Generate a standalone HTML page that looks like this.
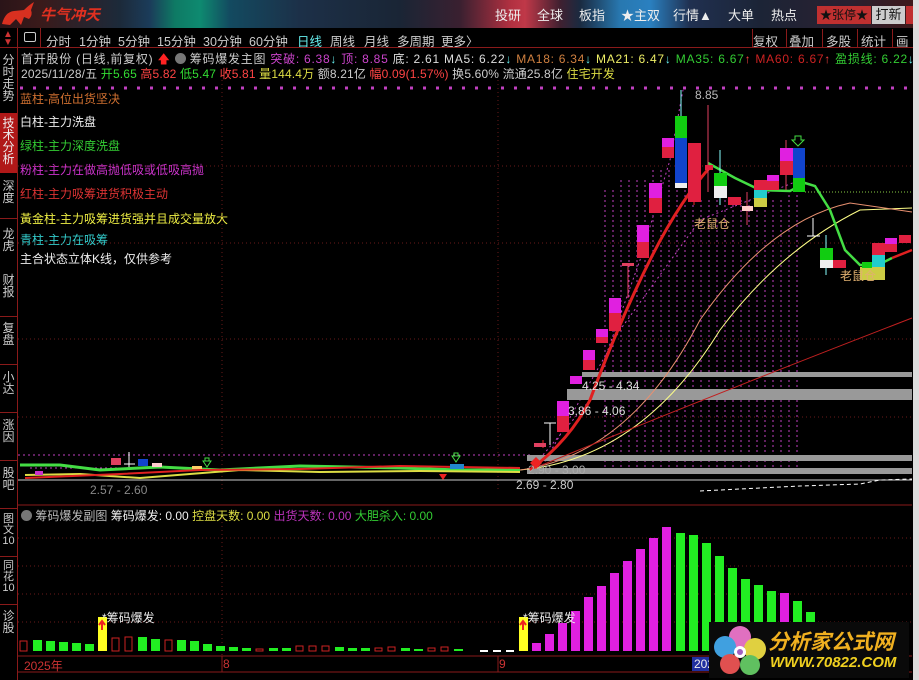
<!DOCTYPE html>
<html><head><meta charset="utf-8"><style>
*{margin:0;padding:0;box-sizing:border-box}
body{width:919px;height:680px;background:#000;overflow:hidden;position:relative;font-family:"Liberation Sans","Noto Sans CJK SC",sans-serif;font-size:12px;color:#ccc}
.a{position:absolute;white-space:nowrap}
#top{left:0;top:0;width:919px;height:28px;background:linear-gradient(90deg,#2a1418 0,#3a1a1a 40px,#1c2a3a 120px,#1b3c5a 150px,#0e7a64 175px,#0e8a70 200px,#134a60 230px,#1c3048 300px,#1a2535 400px,#3a2030 460px,#b03040 510px,#c03848 525px,#402030 560px,#1a2a40 580px,#2878b0 620px,#2a80c0 650px,#203050 690px,#1c2436 760px,#2a2030 850px,#401818 919px)}
.tb{top:5px;color:#eee;font-size:13px}
.tl{top:31px;font-size:12.5px;color:#ccc}
.side{left:0;width:17px;color:#ccc;font-size:12px;line-height:12px;text-align:center;white-space:normal;word-break:break-all}
</style></head><body>
<div id="top" class="a"></div>
<div class="a" style="left:40px;top:4px;color:#e03020;font-size:15px;font-weight:bold;font-style:italic">牛气冲天</div>
<svg class="a" style="left:0;top:0" width="38" height="28"><path d="M2 24 Q5 12 14 11 L24 10 Q29 5 34 2 L31 10 Q33 15 29 19 L24 17 L21 25 L16 19 L10 25 Z" fill="#d83020"/></svg>
<span class="a tb" style="left:495px">投研</span><span class="a tb" style="left:537px">全球</span><span class="a tb" style="left:579px">板指</span><span class="a tb" style="left:621px">★主双</span><span class="a tb" style="left:673px">行情▲</span><span class="a tb" style="left:728px">大单</span><span class="a tb" style="left:771px">热点</span>
<div class="a" style="left:817px;top:6px;width:54px;height:18px;background:#c03030;color:#111;font-size:12px;text-align:center;line-height:18px">★张停★</div>
<div class="a" style="left:872px;top:6px;width:33px;height:18px;background:#ccc;color:#111;font-size:13px;text-align:center;line-height:18px">打新</div>
<div class="a" style="left:906px;top:6px;width:8px;height:18px;background:#c03030"></div>
<div class="a" style="left:913px;top:0;width:6px;height:680px;background:#ddd"></div>
<!-- sidebar -->
<div class="a" style="left:17px;top:28px;width:1px;height:652px;background:#8a1a1a"></div>
<div class="a" style="left:3px;top:31px;color:#c33;font-size:10px;line-height:8px">▲<br>▼</div>
<div class="a" style="left:0;top:47px;width:17px;height:1px;background:#8a1a1a"></div>
<div class="a side" style="top:54px">分时走势</div>
<div class="a side" style="top:113px;height:60px;background:#b01818;color:#eee;padding-top:4px">技术分析</div>
<div class="a side" style="top:180px">深度</div>
<div class="a" style="left:0;top:218px;width:17px;height:1px;background:#8a1a1a"></div>
<div class="a side" style="top:228px">龙虎</div>
<div class="a side" style="top:274px">财报</div>
<div class="a" style="left:0;top:316px;width:17px;height:1px;background:#8a1a1a"></div>
<div class="a side" style="top:322px">复盘</div>
<div class="a" style="left:0;top:364px;width:17px;height:1px;background:#8a1a1a"></div>
<div class="a side" style="top:371px">小达</div>
<div class="a" style="left:0;top:412px;width:17px;height:1px;background:#8a1a1a"></div>
<div class="a side" style="top:419px">涨因</div>
<div class="a" style="left:0;top:460px;width:17px;height:1px;background:#8a1a1a"></div>
<div class="a side" style="top:467px">股吧</div>
<div class="a" style="left:0;top:508px;width:17px;height:1px;background:#8a1a1a"></div>
<div class="a side" style="top:514px;font-size:11px;line-height:11px">图文10</div>
<div class="a" style="left:0;top:556px;width:17px;height:1px;background:#8a1a1a"></div>
<div class="a side" style="top:561px;font-size:11px;line-height:11px">同花10</div>
<div class="a" style="left:0;top:604px;width:17px;height:1px;background:#8a1a1a"></div>
<div class="a side" style="top:610px">诊股</div>
<!-- toolbar -->
<div class="a" style="left:24px;top:32px;width:12px;height:10px;border:1px solid #ccc;border-radius:2px"></div>
<div class="a" style="left:40px;top:28px;width:1px;height:19px;background:#8a1a1a"></div>
<span class="a tl" style="left:46px">分时</span><span class="a tl" style="left:79px">1分钟</span><span class="a tl" style="left:118px">5分钟</span><span class="a tl" style="left:157px">15分钟</span><span class="a tl" style="left:203px">30分钟</span><span class="a tl" style="left:249px">60分钟</span><span class="a tl" style="left:297px;color:#6ee">日线</span><span class="a tl" style="left:330px">周线</span><span class="a tl" style="left:364px">月线</span><span class="a tl" style="left:397px">多周期</span><span class="a tl" style="left:441px">更多〉</span>
<div class="a" style="left:753px;top:31px;font-size:12.5px">复权</div><div class="a" style="left:789px;top:31px;font-size:12.5px">叠加</div><div class="a" style="left:826px;top:31px;font-size:12.5px">多股</div><div class="a" style="left:861px;top:31px;font-size:12.5px">统计</div><div class="a" style="left:896px;top:31px;font-size:12.5px">画</div>
<div class="a" style="left:752px;top:29px;width:1px;height:18px;background:#8a1a1a"></div><div class="a" style="left:786px;top:29px;width:1px;height:18px;background:#8a1a1a"></div><div class="a" style="left:822px;top:29px;width:1px;height:18px;background:#8a1a1a"></div><div class="a" style="left:857px;top:29px;width:1px;height:18px;background:#8a1a1a"></div><div class="a" style="left:892px;top:29px;width:1px;height:18px;background:#8a1a1a"></div>
<div class="a" style="left:18px;top:47px;width:895px;height:1px;background:#8a1a1a"></div>
<!-- info rows -->
<div class="a" style="left:21px;top:50px;font-size:12px;letter-spacing:0.75px">首开股份 (日线,前复权) <span style="color:#f22">🡅</span> <span style="display:inline-block;width:11px;height:11px;border-radius:6px;background:#777;vertical-align:-1px"></span> 筹码爆发主图 <span style="color:#c4c">突破: 6.38</span><span style="color:#6ee">↓</span> <span style="color:#c4c">顶: 8.85</span> <span style="color:#ddd">底: 2.61 MA5: 6.22</span><span style="color:#6ee">↓</span> <span style="color:#d08040">MA18: 6.34</span><span style="color:#6ee">↓</span> <span style="color:#ee6">MA21: 6.47</span><span style="color:#6ee">↓</span> <span style="color:#3c3">MA35: 6.67</span><span style="color:#f44">↑</span> <span style="color:#c22">MA60: 6.67</span><span style="color:#f44">↑</span> <span style="color:#3c3">盈损线: 6.22</span><span style="color:#6ee">↓</span> <span style="color:#c4c">获</span></div>
<div class="a" style="left:21px;top:65px;font-size:12px;letter-spacing:0.15px">2025/11/28/五 <span style="color:#3d3">开5.65</span> <span style="color:#f44">高5.82</span> <span style="color:#3d3">低5.47</span> <span style="color:#f44">收5.81</span> <span style="color:#dd4">量144.4万</span> 额8.21亿 <span style="color:#f44">幅0.09(1.57%)</span> 换5.60% 流通25.8亿 <span style="color:#dd4">住宅开发</span></div>
<!-- legend -->
<div class="a" style="left:20px;top:90px;color:#d07030">蓝柱-高位出货坚决</div>
<div class="a" style="left:20px;top:113px;color:#eee">白柱-主力洗盘</div>
<div class="a" style="left:20px;top:137px;color:#3c3">绿柱-主力深度洗盘</div>
<div class="a" style="left:20px;top:161px;color:#c3c">粉柱-主力在做高抛低吸或低吸高抛</div>
<div class="a" style="left:20px;top:185px;color:#d33">红柱-主力吸筹进货积极主动</div>
<div class="a" style="left:20px;top:210px;color:#ee4">黃金柱-主力吸筹进货强并且成交量放大</div>
<div class="a" style="left:20px;top:231px;color:#3cc">青柱-主力在吸筹</div>
<div class="a" style="left:20px;top:250px;color:#eee">主合状态立体K线，仅供参考</div>
<!-- main chart -->
<svg class="a" style="left:0;top:0" width="913" height="680">
<g stroke="#6a1a1a" stroke-dasharray="1 3" stroke-width="1">
<line x1="18" y1="166" x2="912" y2="166"/><line x1="18" y1="243" x2="912" y2="243"/><line x1="18" y1="339" x2="912" y2="339"/><line x1="18" y1="417" x2="912" y2="417"/>
<line x1="222" y1="80" x2="222" y2="490"/><line x1="498" y1="80" x2="498" y2="490"/>
<line x1="18" y1="538" x2="912" y2="538"/><line x1="18" y1="566" x2="912" y2="566"/><line x1="18" y1="594" x2="912" y2="594"/><line x1="18" y1="622" x2="912" y2="622"/>
<line x1="222" y1="510" x2="222" y2="655"/>
</g>
<line x1="20" y1="88" x2="912" y2="88" stroke="#c040c0" stroke-width="3" stroke-dasharray="3 10"/>
<line x1="805" y1="192" x2="912" y2="192" stroke="#8c4" stroke-dasharray="1 2"/>
<g stroke="#c040c0" stroke-dasharray="2 3">
<line x1="605" y1="190" x2="605" y2="470"/><line x1="613" y1="190" x2="613" y2="470"/><line x1="621" y1="180" x2="621" y2="470"/><line x1="629" y1="180" x2="629" y2="470"/><line x1="637" y1="180" x2="637" y2="470"/><line x1="645" y1="180" x2="645" y2="470"/><line x1="653" y1="170" x2="653" y2="470"/><line x1="661" y1="170" x2="661" y2="470"/><line x1="669" y1="170" x2="669" y2="470"/><line x1="677" y1="170" x2="677" y2="470"/><line x1="685" y1="160" x2="685" y2="470"/><line x1="693" y1="160" x2="693" y2="470"/><line x1="701" y1="200" x2="701" y2="470"/><line x1="709" y1="200" x2="709" y2="470"/><line x1="717" y1="200" x2="717" y2="470"/><line x1="725" y1="200" x2="725" y2="470"/><line x1="733" y1="200" x2="733" y2="470"/><line x1="741" y1="200" x2="741" y2="470"/><line x1="749" y1="200" x2="749" y2="470"/><line x1="757" y1="200" x2="757" y2="470"/><line x1="765" y1="200" x2="765" y2="470"/><line x1="773" y1="200" x2="773" y2="470"/><line x1="781" y1="200" x2="781" y2="470"/><line x1="789" y1="190" x2="789" y2="470"/><line x1="797" y1="190" x2="797" y2="470"/>
<path d="M530 470 L590 400 L640 260 L670 160 L683 90" fill="none" stroke-dasharray="2 3"/>
<path d="M540 470 L620 330 L700 220 L800 180" fill="none"/>
<line x1="18" y1="455" x2="530" y2="455"/><line x1="30" y1="468" x2="130" y2="468"/>
</g>
<g fill="#999"><rect x="582" y="372" width="330" height="5"/><rect x="567" y="389" width="345" height="11"/><rect x="527" y="455" width="385" height="6"/><rect x="527" y="468" width="385" height="6"/></g>
<line x1="18" y1="480" x2="912" y2="480" stroke="#ccc"/>
<path d="M700 491 L760 488 L800 486 L860 484 L880 480 L912 479" stroke="#fff" stroke-dasharray="4 3" fill="none"/>
<path d="M520 470 Q640 460 720 330 Q780 250 860 210 L912 208" stroke="#ff8" fill="none"/>
<path d="M520 470 Q630 455 700 320 Q770 220 850 203 L912 212" stroke="#e89070" fill="none"/>
<path d="M530 470 Q700 400 912 318" stroke="#c02020" fill="none"/>
<path d="M530 470 Q570 440 590 400 Q620 320 650 260 Q680 200 712 165" stroke="#e02020" stroke-width="3" fill="none"/>
<path d="M708 163 L735 178 L760 190 L790 191 L805 183 L815 186 L830 210 L845 250 L860 265 L878 265 L892 258" stroke="#4d4" stroke-width="2.5" fill="none"/>
<path d="M892 258 L912 250" stroke="#e02020" stroke-width="2.5" fill="none"/>
<path d="M20 465 L60 465 L100 470 L160 467 L220 470 L300 466 L400 468 L460 470 L520 470" stroke="#4d4" stroke-width="3" fill="none"/>
<path d="M25 475 L80 474 L140 478 L240 470 L320 472 L420 471 L520 472" stroke="#dd4" stroke-width="2" fill="none"/>
<path d="M25 478 L120 474 L200 470 L300 469 L400 466 L520 468" stroke="#e02020" stroke-width="2" fill="none"/>
<rect x="35" y="471" width="8" height="4" fill="#c3c"/><rect x="111" y="458" width="10" height="7" fill="#e04060"/><rect x="138" y="459" width="10" height="7" fill="#14c"/><rect x="152" y="463" width="10" height="4" fill="#fcc"/><rect x="192" y="466" width="10" height="3" fill="#fc6"/>
<line x1="129" y1="452" x2="129" y2="467" stroke="#fff"/><line x1="124" y1="464" x2="135" y2="464" stroke="#fff"/>
<path d="M203 461 h8 l-4 6 z M205 458 h4 v3 h-4z" stroke="#4d4" fill="none"/>
<path d="M452 456 h8 l-4 6 z M454 453 h4 v3 h-4z" stroke="#4d4" fill="none"/>
<rect x="450" y="464" width="14" height="5" fill="#28c"/>
<path d="M439 474 h8 l-4 6 z" fill="#e22"/>
<path d="M530 463 l6 -6 l6 6 l-6 6z" fill="#e22"/>
<line x1="543" y1="440" x2="543" y2="448" stroke="#e22"/><rect x="534" y="443" width="12" height="4" fill="#e04060"/>
<line x1="550" y1="423" x2="550" y2="445" stroke="#fff"/><line x1="544" y1="423" x2="556" y2="423" stroke="#fff"/>
<rect x="557" y="401" width="12" height="31" fill="#e02040"/><rect x="557" y="401" width="12" height="15" fill="#e020e0"/>
<rect x="570" y="376" width="12" height="8" fill="#e020e0"/>
<rect x="583" y="350" width="12" height="20" fill="#e02040"/><rect x="583" y="350" width="12" height="10" fill="#e020e0"/>
<rect x="596" y="329" width="12" height="14" fill="#e02040"/><rect x="596" y="329" width="12" height="8" fill="#e020e0"/>
<rect x="609" y="298" width="12" height="33" fill="#e02040"/><rect x="609" y="298" width="12" height="15" fill="#e020e0"/>
<rect x="622" y="263" width="12" height="3" fill="#e04060"/><line x1="628" y1="263" x2="628" y2="298" stroke="#e04060"/>
<rect x="637" y="225" width="12" height="33" fill="#e02040"/><rect x="637" y="225" width="12" height="17" fill="#e020e0"/>
<rect x="649" y="183" width="13" height="30" fill="#e02040"/><rect x="649" y="183" width="13" height="15" fill="#e020e0"/>
<rect x="662" y="138" width="12" height="20" fill="#e02040"/><rect x="662" y="138" width="12" height="9" fill="#e020e0"/>
<line x1="681" y1="90" x2="681" y2="116" stroke="#8ff"/>
<rect x="675" y="116" width="12" height="22" fill="#1c1"/><rect x="675" y="138" width="12" height="45" fill="#14c"/><rect x="675" y="183" width="12" height="5" fill="#eee"/>
<line x1="694" y1="190" x2="694" y2="205" stroke="#e22"/><rect x="688" y="143" width="13" height="59" fill="#e02040"/>
<line x1="708" y1="105" x2="708" y2="192" stroke="#e04060"/><rect x="705" y="165" width="8" height="5" fill="#e02040"/>
<line x1="720" y1="150" x2="720" y2="205" stroke="#8ff"/><rect x="714" y="173" width="13" height="13" fill="#1c1"/><rect x="714" y="186" width="13" height="12" fill="#eee"/>
<rect x="728" y="197" width="13" height="8" fill="#e02040"/>
<line x1="747" y1="192" x2="747" y2="225" stroke="#e04060"/><rect x="742" y="206" width="11" height="5" fill="#fcc"/>
<rect x="754" y="180" width="13" height="10" fill="#e02040"/><rect x="754" y="190" width="13" height="8" fill="#2cc"/><rect x="754" y="198" width="13" height="9" fill="#cc4"/>
<rect x="767" y="175" width="12" height="15" fill="#e02040"/><rect x="767" y="175" width="12" height="6" fill="#e020e0"/>
<line x1="786" y1="140" x2="786" y2="190" stroke="#e04060"/><rect x="780" y="148" width="13" height="27" fill="#e02040"/><rect x="780" y="148" width="13" height="13" fill="#e020e0"/>
<rect x="793" y="148" width="12" height="30" fill="#14c"/><rect x="793" y="178" width="12" height="14" fill="#1c1"/>
<path d="M795 136 h6 v4 h3 l-6 6 l-6 -6 h3z" stroke="#4d4" fill="none"/>
<line x1="813" y1="218" x2="813" y2="236" stroke="#fff"/><line x1="807" y1="236" x2="820" y2="236" stroke="#fff"/>
<line x1="826" y1="235" x2="826" y2="275" stroke="#8ff"/><rect x="820" y="248" width="13" height="12" fill="#1c1"/><rect x="820" y="260" width="13" height="8" fill="#eee"/>
<rect x="833" y="260" width="13" height="8" fill="#e02040"/>
<rect x="860" y="267" width="25" height="13" fill="#cc4"/><rect x="862" y="262" width="10" height="6" fill="#1c1"/>
<rect x="872" y="243" width="13" height="12" fill="#e02040"/><rect x="872" y="255" width="13" height="12" fill="#2cc"/>
<rect x="885" y="238" width="12" height="14" fill="#e02040"/><rect x="885" y="238" width="12" height="6" fill="#e020e0"/>
<rect x="899" y="235" width="12" height="8" fill="#e02040"/>
<line x1="18" y1="505" x2="912" y2="505" stroke="#8a1a1a"/>
<line x1="18" y1="656" x2="912" y2="656" stroke="#8a1a1a"/>
<line x1="18" y1="672" x2="912" y2="672" stroke="#8a1a1a"/>
<g fill="none" stroke="#c22"><rect x="20" y="641" width="7" height="10"/><rect x="112" y="638" width="7" height="13"/><rect x="125" y="637" width="7" height="14"/><rect x="165" y="640" width="7" height="11"/><rect x="256" y="649" width="7" height="2"/><rect x="296" y="646" width="7" height="5"/><rect x="309" y="646" width="7" height="5"/><rect x="322" y="646" width="7" height="5"/><rect x="375" y="648" width="7" height="3"/><rect x="388" y="647" width="7" height="4"/><rect x="428" y="648" width="7" height="3"/><rect x="441" y="647" width="7" height="4"/></g>
<g fill="#2e2"><rect x="33" y="640" width="9" height="11"/><rect x="46" y="641" width="9" height="10"/><rect x="59" y="642" width="9" height="9"/><rect x="72" y="643" width="9" height="8"/><rect x="85" y="644" width="9" height="7"/><rect x="138" y="637" width="9" height="14"/><rect x="151" y="639" width="9" height="12"/><rect x="177" y="640" width="9" height="11"/><rect x="190" y="641" width="9" height="10"/><rect x="203" y="644" width="9" height="7"/><rect x="216" y="646" width="9" height="5"/><rect x="229" y="647" width="9" height="4"/><rect x="242" y="648" width="9" height="3"/><rect x="269" y="648" width="9" height="3"/><rect x="282" y="648" width="9" height="3"/><rect x="335" y="647" width="9" height="4"/><rect x="348" y="648" width="9" height="3"/><rect x="361" y="648" width="9" height="3"/><rect x="401" y="648" width="9" height="3"/><rect x="414" y="649" width="9" height="2"/><rect x="454" y="649" width="9" height="2"/>
<rect x="676" y="533" width="9" height="118"/><rect x="689" y="535" width="9" height="116"/><rect x="702" y="543" width="9" height="108"/><rect x="715" y="556" width="9" height="95"/><rect x="728" y="568" width="9" height="83"/><rect x="741" y="579" width="9" height="72"/><rect x="754" y="585" width="9" height="66"/><rect x="767" y="591" width="9" height="60"/><rect x="793" y="601" width="9" height="50"/><rect x="806" y="612" width="9" height="39"/></g>
<g fill="#e020e0"><rect x="532" y="643" width="9" height="8"/><rect x="545" y="634" width="9" height="17"/><rect x="558" y="623" width="9" height="28"/><rect x="571" y="611" width="9" height="40"/><rect x="584" y="597" width="9" height="54"/><rect x="597" y="586" width="9" height="65"/><rect x="610" y="573" width="9" height="78"/><rect x="623" y="561" width="9" height="90"/><rect x="636" y="549" width="9" height="102"/><rect x="649" y="538" width="9" height="113"/><rect x="662" y="527" width="9" height="124"/><rect x="780" y="593" width="9" height="58"/></g>
<rect x="98" y="617" width="9" height="34" fill="#ff2"/><rect x="519" y="617" width="9" height="34" fill="#ff2"/>
<path d="M102 630 v-8 M99 625 l3 -4 l3 4 M523 630 v-8 M520 625 l3 -4 l3 4" stroke="#e22" stroke-width="2" fill="none"/>
<path d="M480 651 h35" stroke="#fff" stroke-width="2" stroke-dasharray="8 5"/>
<line x1="222" y1="656" x2="222" y2="672" stroke="#8a1a1a"/><line x1="498" y1="656" x2="498" y2="672" stroke="#8a1a1a"/>
</svg>
<div class="a" style="left:695px;top:88px;color:#bbb">8.85</div>
<div class="a" style="left:694px;top:215px;color:#e0b070">老鼠仓</div>
<div class="a" style="left:840px;top:267px;color:#e0b070">老鼠仓</div>
<div class="a" style="left:582px;top:379px;color:#ddd">4.25 - 4.34</div>
<div class="a" style="left:568px;top:404px;color:#ddd">3.86 - 4.06</div>
<div class="a" style="left:528px;top:463px;color:#aaa">2.90 - 3.00</div>
<div class="a" style="left:516px;top:478px;color:#ccc">2.69 - 2.80</div>
<div class="a" style="left:90px;top:483px;color:#888">2.57 - 2.60</div>
<div class="a" style="left:21px;top:507px;font-size:12px"><span style="display:inline-block;width:11px;height:11px;border-radius:6px;background:#777;vertical-align:-1px"></span> <span style="color:#bbb">筹码爆发副图</span> <span style="color:#eee">筹码爆发: 0.00</span> <span style="color:#dd4">控盘天数: 0.00</span> <span style="color:#b3b">出货天数: 0.00</span> <span style="color:#3c3">大胆杀入: 0.00</span></div>
<div class="a" style="left:102px;top:609px;color:#eee">*筹码爆发</div>
<div class="a" style="left:523px;top:609px;color:#eee">*筹码爆发</div>
<div class="a" style="left:24px;top:657px;color:#c33">2025年</div>
<div class="a" style="left:223px;top:657px;color:#c33">8</div>
<div class="a" style="left:499px;top:657px;color:#c33">9</div>
<div class="a" style="left:692px;top:657px;background:#2030a0;color:#eee;padding:0 2px">202</div>
<div class="a" style="left:709px;top:622px;width:200px;height:56px;background:#0a0a0a"></div>
<svg class="a" style="left:710px;top:622px" width="60" height="56"><circle cx="30" cy="15" r="11" fill="#e070c0"/><circle cx="15" cy="25" r="11" fill="#40a0e0"/><circle cx="45" cy="27" r="11" fill="#e0d040"/><circle cx="20" cy="42" r="10" fill="#e05050"/><circle cx="40" cy="43" r="10" fill="#60c060"/><circle cx="30" cy="30" r="6" fill="#fff"/><circle cx="30" cy="30" r="3" fill="#a060c0"/></svg>
<div class="a" style="left:768px;top:626px;color:#f0b020;font-size:21px;font-weight:bold;font-style:italic">分析家公式网</div>
<div class="a" style="left:770px;top:654px;color:#f0d020;font-size:15px;font-weight:bold;font-style:italic">WWW.70822.COM</div>
</body></html>
